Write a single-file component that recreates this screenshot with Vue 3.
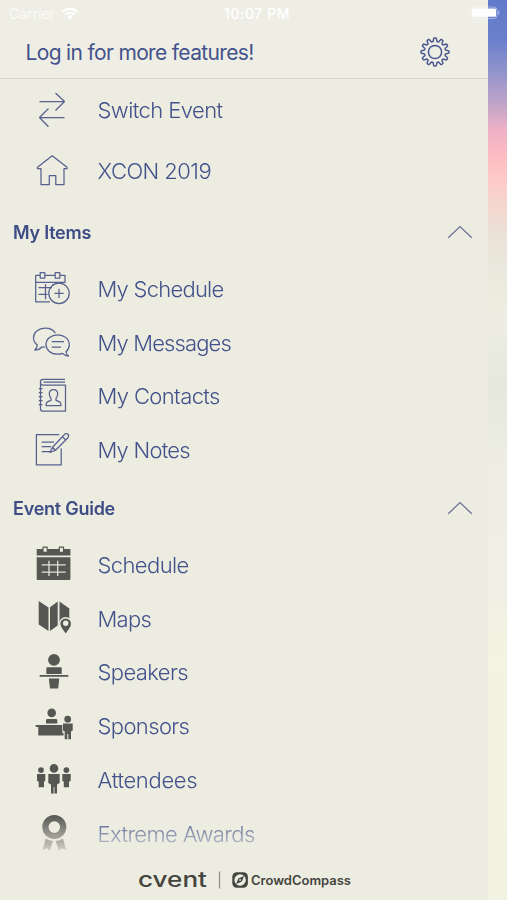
<template>
  <div class="screen">
    <div class="drawer">
      <header class="top">
        <div class="status">
          <span class="carrier">Carrier</span>
          <svg class="wifi" width="18" height="13" viewBox="0 0 18 13">
            <path d="M1.5 4.8C5.8 .9 12.2 .9 16.5 4.8M4.2 7.6C7 5.2 11 5.2 13.8 7.6" />
            <path class="dot" d="M9 12.4L6 9.4C7.7 8 10.3 8 12 9.4Z" />
          </svg>
          <span class="clock">10:07 PM</span>
        </div>
        <div class="login">
          <span class="login-text">Log in for more features!</span>
          <svg class="gear" width="32" height="32" viewBox="-16 -16 32 32">
            <path :d="gearPath" />
            <circle r="6.6" />
          </svg>
        </div>
      </header>

      <nav class="menu">
        <template v-for="(section, i) in sections" :key="i">
          <div v-if="section.title" class="section-title">
            <span>{{ section.title }}</span>
            <svg width="26" height="14" viewBox="0 0 26 14"><path d="M1.2 12.7L13 1.6L24.8 12.7" /></svg>
          </div>
          <div
            v-for="item in section.items"
            :key="item.label"
            class="row"
            :class="{ tall: !section.title }"
          >
            <svg class="icon" :class="{ solid: section.solid }" width="40" height="40" viewBox="0 0 40 40">
              <path v-for="(p, n) in item.icon" :key="n" :d="p.d || p" :class="p.cls" />
            </svg>
            <span :style="{ letterSpacing: item.spacing + 'px' }">{{ item.label }}</span>
          </div>
        </template>
      </nav>

      <footer class="brands">
        <svg width="216" height="26" viewBox="0 0 216 26">
          <text class="cvent" x="0" y="19.2" textLength="69" lengthAdjust="spacingAndGlyphs">cvent</text>
          <path class="divider" d="M81.5 3.5V20.5" />
          <rect class="badge" x="94.3" y="4.2" width="15.6" height="15.6" rx="4.6" />
          <circle class="dial" cx="102.1" cy="12" r="5.7" />
          <path class="needle" d="M106 8L103.9 13.6L98.2 16L100.3 10.4Z" />
          <circle class="pivot" cx="102.1" cy="12" r="0.9" />
          <text class="compass" x="113" y="17" textLength="100" lengthAdjust="spacingAndGlyphs">CrowdCompass</text>
        </svg>
      </footer>
    </div>
    <div class="peek"></div>
    <svg class="battery" width="32" height="14" viewBox="0 0 32 14">
      <rect class="shell" x="1" y="1" width="27" height="11.5" rx="3" />
      <rect class="charge" x="3" y="2.6" width="24" height="8.2" rx="1" />
      <path class="charge tip" d="M29.2 4.6C31 5.4 31 8 29.2 8.9Z" />
    </svg>
  </div>
</template>

<script setup>
// twelve-toothed cog outline
const makeGear = () => {
  const teeth = 12
  const pts = []
  for (let i = 0; i < 144; i++) {
    const a = (i / 144) * Math.PI * 2
    const wave = Math.cos(a * teeth)
    const r = 12.3 + 1.8 * Math.tanh(wave * 2.2)
    pts.push(`${(r * Math.sin(a)).toFixed(2)} ${(-r * Math.cos(a)).toFixed(2)}`)
  }
  return 'M' + pts.join('L') + 'Z'
}
const gearPath = makeGear()

const sections = [
  {
    items: [
      {
        label: 'Switch Event',
        spacing: -0.58,
        icon: ['M7.5 11.5H32.5M23.5 3L32.5 11.5L23.5 20.5', 'M32.5 27.5H7.5M16.5 18.5L7.5 27.5L16.5 36.8']
      },
      {
        label: 'XCON 2019',
        spacing: -0.55,
        icon: ['M20.2 4.8L5.5 16.3V17.7H9V33.7H17.3V24.7H23.8V33.7H32V17.7H35V16.3Z']
      }
    ]
  },
  {
    title: 'My Items',
    items: [
      {
        label: 'My Schedule',
        spacing: -0.76,
        icon: [
          'M8 6.3H3.7V32.8H18M13 6.3H23M28 6.3H33V13.3H3.7',
          'M8.2 3.6H12.8V9H8.2ZM23.2 3.6H27.8V9H23.2Z',
          'M6.5 18.5H20M6.5 25.3H15.5M13.5 15.2V30.2M21 15V16.5',
          'M37.2 24.3A10.2 10.2 0 1 1 16.8 24.3A10.2 10.2 0 1 1 37.2 24.3Z',
          'M27 19.7V28.9M22.4 24.3H31.6'
        ]
      },
      {
        label: 'My Messages',
        spacing: -0.87,
        icon: [
          'M23.3 10.2C21.5 7 17.5 5.2 13 5.2C6.5 5.2 1.5 9.3 1.5 14.5C1.5 17.8 3 20.3 5.3 22C5.3 24.5 4 26 2.7 27.2C5.5 27 8 26 9.5 24C10.5 24.2 11.8 24.2 13 24',
          'M34 28.8C36 27 37.3 24.5 37.3 21.7C37.3 16 32 11.8 25.7 11.8S14 16 14 21.5S19 31.2 25.7 31.2C27.5 31.2 29 31 30.5 30.4C32 32 34 33 36.5 33.1C35 32 34.2 30.5 34 28.8Z',
          'M19.7 18.6H32M19.7 24H29'
        ]
      },
      {
        label: 'My Contacts',
        spacing: -0.62,
        icon: [
          'M33 3.4H10.8C9.2 3.4 8.5 4.5 8.5 6V33C8.5 34.5 9.2 35 10.8 35H33.5V9H10.8C9.2 9 8.5 8 8.5 6.5M11.5 6.2H33',
          'M6.8 12.5H10.5M6.8 16.5H10.5M6.8 20.5H10.5M6.8 24.5H10.5M6.8 28.5H10.5',
          'M14 29.5C14 26 15.5 25.5 19 24.3V22.5C17.8 21 17.3 19.5 17.3 17.8C17.3 15 19 13.6 21.5 13.6S25.7 15 25.7 17.8C25.7 19.5 25.2 21 24 22.5V24.3C27.5 25.5 29 26 29 29.5Z'
        ]
      },
      {
        label: 'My Notes',
        spacing: -0.76,
        icon: [
          'M27.3 4.6H4.4V34.9H29.2V18.2',
          'M9.7 12.2H22M9.7 16.7H19M9.7 21.6H18',
          'M18 22.5L20.5 17.2L32 5C33 3.6 34.8 3.2 36 4.3S36.5 7 35.5 8.2L23.5 20.2ZM30.5 6.8L33.5 9.8M20.5 17.2L23.5 20.2'
        ]
      }
    ]
  },
  {
    title: 'Event Guide',
    solid: true,
    items: [
      {
        label: 'Schedule',
        spacing: -0.6,
        icon: [
          'M4.7 4.1H38.4V10.6H4.7ZM4.7 12.3H38.4V34Q38.4 35 37.4 35H5.7Q4.7 35 4.7 34Z',
          { d: 'M17 15.8V31.1M25.7 15.8V31.1M9.7 19.8H33.7M9.7 27.1H33.7', cls: 'cut' },
          { d: 'M11 2.2H15.2V7.4H11ZM27.3 2.2H31.5V7.4H27.3Z', cls: 'ring' }
        ]
      },
      {
        label: 'Maps',
        spacing: -0.75,
        icon: [
          'M6.7 2.1L16.5 8.4V32L6.7 25.4ZM18 8.2L25.7 2.6V26.4L18 31.9ZM27.5 2.6L37.3 9.5V26H27.5Z',
          { d: 'M33.7 36C31.5 31.8 27.7 28.8 27.7 24.7A6 6 0 0 1 39.7 24.7C39.7 28.8 35.9 31.8 33.7 36Z', cls: 'pin' },
          { d: 'M36.4 24.3A2.7 2.7 0 1 1 31 24.3A2.7 2.7 0 1 1 36.4 24.3Z', cls: 'hole' }
        ]
      },
      {
        label: 'Speakers',
        spacing: -0.6,
        icon: [
          'M27.9 7.9A5.9 5.9 0 1 1 16.1 7.9A5.9 5.9 0 1 1 27.9 7.9Z',
          'M15.3 15.3H28.7Q29.7 15.3 29.7 16.3V22H14.3V16.3Q14.3 15.3 15.3 15.3ZM7.7 23.1H36.3V24.8H7.7ZM16.8 26.4H27.3L26.2 36.6H18Z'
        ]
      },
      {
        label: 'Sponsors',
        spacing: -0.62,
        icon: [
          'M24 6.9A4.3 4.3 0 1 1 15.4 6.9A4.3 4.3 0 1 1 24 6.9ZM14.9 12.9H24.4L25.3 13.8V17.4H14V13.8Z',
          'M3.7 18.9H30.3V26.5L31.5 27V29.6H6.3V21H3.7Z',
          'M39.1 13.2A3.4 3.4 0 1 1 32.3 13.2A3.4 3.4 0 1 1 39.1 13.2ZM31 17.5H40.7V24.4L39 25.4V33.2H36.3V28H35.3V33.2H32.7V25.4L31 24.4Z'
        ]
      },
      {
        label: 'Attendees',
        spacing: -0.33,
        icon: [
          'M26.3 8.4A4.3 4.3 0 1 1 17.7 8.4A4.3 4.3 0 1 1 26.3 8.4ZM16.3 14.1H27.7V23L25 24.4V33.4H22.4V27H21.6V33.4H19V24.4L16.3 23Z',
          'M11.9 10.1A2.9 2.9 0 1 1 6.1 10.1A2.9 2.9 0 1 1 11.9 10.1ZM5 14.1H13.3V20.8L12 21.8V27.2H6.7V21.8L5 20.8Z',
          'M37.3 10.1A2.9 2.9 0 1 1 31.5 10.1A2.9 2.9 0 1 1 37.3 10.1ZM30.3 14.1H38.7V20.8L37 21.8V27.2H31.8V21.8L30.3 20.8Z'
        ]
      },
      {
        label: 'Extreme Awards',
        spacing: -0.6,
        icon: [
          { d: 'M34.3 13.1A12 12 0 1 1 10.3 13.1A12 12 0 1 1 34.3 13.1ZM28.1 13.1A5.8 5.8 0 1 0 16.5 13.1A5.8 5.8 0 1 0 28.1 13.1Z', cls: 'medal' },
          'M13.7 24.4C16 26 18.5 26.8 21 26.8L17.8 37L15 34.2L10.5 36ZM31 24.4C28.6 26 26.2 26.8 23.6 26.8L26.9 37L29.7 34.2L34.3 36Z'
        ]
      }
    ]
  }
]
</script>

<style>
body {
  margin: 0;
  background: #ecece0;
}
</style>

<style scoped>
.screen {
  position: relative;
  display: flex;
  width: 507px;
  height: 900px;
  overflow: hidden;
  font-family: Inter, "Liberation Sans", sans-serif;
  color: #43528b;
}

.drawer {
  display: flex;
  flex-direction: column;
  width: 487.5px;
  background: #ecece0;
}

.peek {
  flex: 1;
  background: linear-gradient(
    #627acb 0,
    #6b80cc 40px,
    #8f93cb 70px,
    #c2a5c8 105px,
    #eeb1c5 130px,
    #fcbcc3 155px,
    #fec9c8 178px,
    #f5d5ce 203px,
    #ebe0d7 232px,
    #eae9dd 270px,
    #edeee1 320px,
    #e7e8dc 385px,
    #edeee1 460px,
    #f0f1e4 600px,
    #f2f3e1 660px,
    #f1f2e2 900px
  );
}

.top {
  flex: none;
  box-sizing: border-box;
  height: 79px;
  background: #efeee5;
  border-bottom: 1px solid #d8d7cf;
}

.status {
  display: flex;
  align-items: center;
  height: 27px;
  color: #fff;
}

.carrier {
  width: 46px;
  margin-left: 9px;
  font-size: 14px;
  color: #fafaf6;
}

.wifi {
  margin-left: 6px;
  fill: none;
  stroke: #fff;
  stroke-width: 2.2;
}

.wifi .dot {
  fill: #fff;
  stroke: none;
}

.clock {
  margin-left: 145px;
  font-size: 14px;
  font-weight: 500;
  letter-spacing: 0.6px;
}

.login {
  display: flex;
  align-items: center;
  justify-content: space-between;
  height: 50px;
  padding: 0 37px 0 25.5px;
}

.login-text {
  padding-top: 1px;
  font-size: 21px;
  letter-spacing: -0.66px;
}

.gear {
  fill: none;
  stroke: #4a5890;
  stroke-width: 1.5;
}

.menu {
  flex: none;
  height: 782px;
  -webkit-mask-image: linear-gradient(#000 736px, transparent 780px);
  mask-image: linear-gradient(#000 736px, transparent 780px);
}

.row {
  display: flex;
  align-items: center;
  gap: 25.5px;
  height: 53.75px;
  padding-left: 32px;
  font-size: 22px;
  font-weight: 300;
  white-space: nowrap;
}

.row.tall {
  height: 61px;
}

.section-title {
  display: flex;
  align-items: center;
  justify-content: space-between;
  height: 61px;
  padding: 0 14.5px 0 13px;
  font-size: 18px;
  font-weight: 600;
  letter-spacing: -0.25px;
  color: #3d4c85;
}

.section-title span {
  padding-top: 1px;
}

.section-title svg {
  fill: none;
  stroke: #6b7396;
  stroke-width: 1.3;
}

.icon {
  flex: none;
  overflow: visible;
  fill: none;
  stroke: #56618f;
  stroke-width: 1.25;
  stroke-linejoin: round;
}

.icon.solid {
  fill: #565652;
  stroke: none;
}

.icon .cut {
  fill: none;
  stroke: #e3e3d8;
  stroke-width: 1.3;
}

.icon .ring {
  fill: #ecece0;
  stroke: #565652;
  stroke-width: 1.2;
}

.icon .pin {
  stroke: #ecece0;
  stroke-width: 1.4;
}

.icon .hole {
  fill: #ecece0;
}

.icon .medal {
  fill-rule: evenodd;
}

.brands {
  display: flex;
  height: 32px;
  padding: 7px 0 0 138px;
}

.cvent {
  font-size: 20.5px;
  font-weight: 500;
  fill: #44443f;
}

.compass {
  font-size: 12.8px;
  font-weight: 600;
  fill: #44443f;
}

.divider {
  stroke: #8e8e86;
  stroke-width: 1.2;
}

.badge {
  fill: #44443f;
}

.dial {
  fill: #ecece0;
}

.needle {
  fill: #44443f;
}

.pivot {
  fill: #ecece0;
}

/* the battery straddles the drawer edge */
.battery {
  position: absolute;
  top: 6px;
  left: 469px;
}

.battery .shell {
  fill: none;
  stroke: #fff;
  stroke-opacity: 0.4;
}

.battery .charge {
  fill: #fff;
}

.battery .tip {
  opacity: 0.5;
}
</style>
